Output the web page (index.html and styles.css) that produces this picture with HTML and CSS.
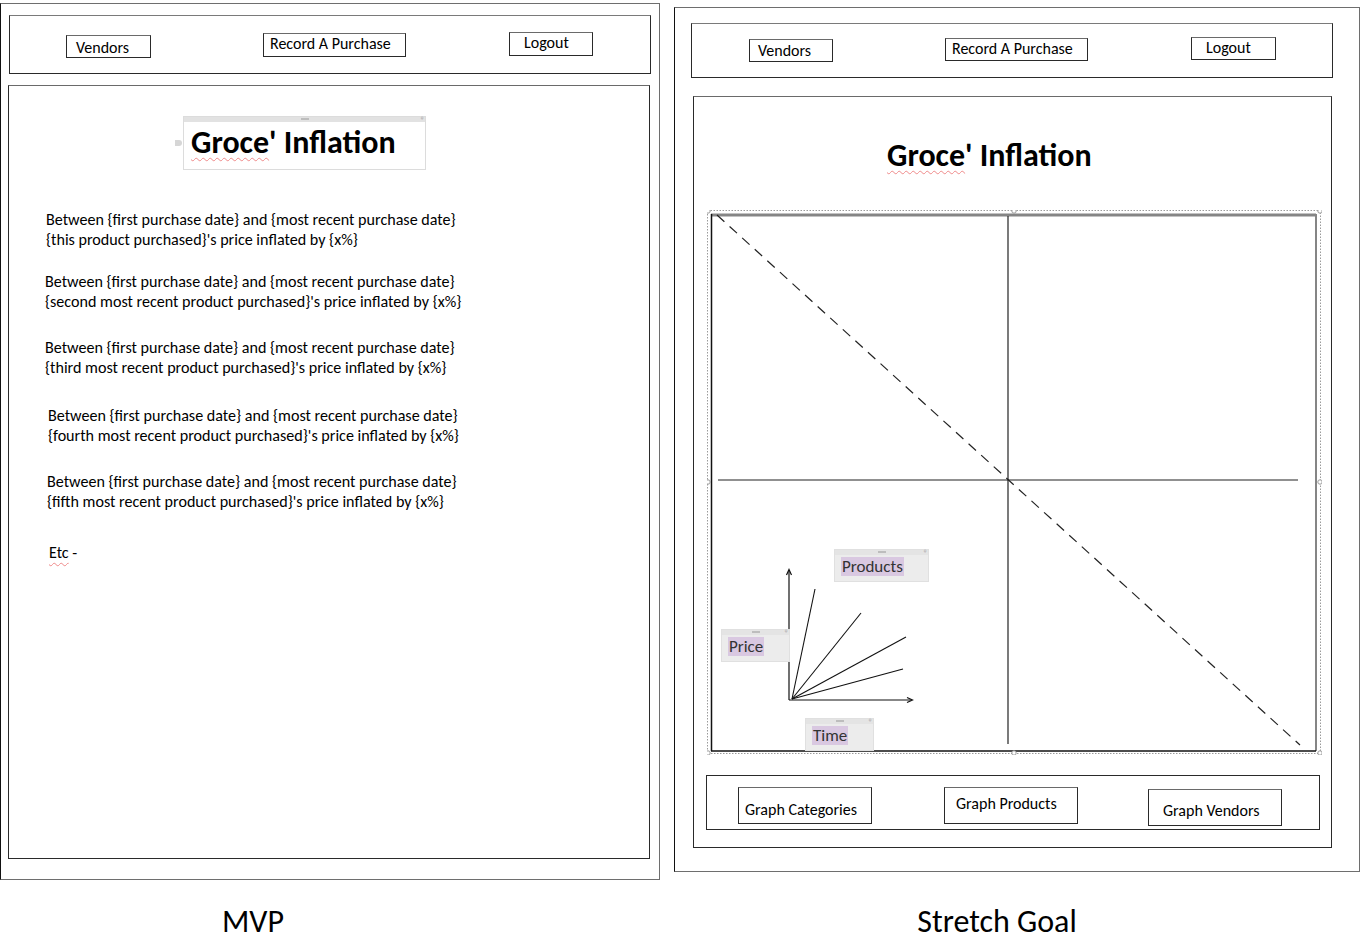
FILE: index.html
```html
<!DOCTYPE html>
<html lang="en">
<head>
<meta charset="utf-8">
<title>Groce' Inflation wireframes</title>
<link rel="stylesheet" href="styles.css">
</head>
<body>
<div class="page">
  <div class="boards">
    <section class="frame mvp">
      <nav class="nav">
        <div class="btn b-vendors">Vendors</div>
        <div class="btn b-record">Record A Purchase</div>
        <div class="btn b-logout">Logout</div>
      </nav>
      <main class="content">
        <div class="titlebox">
          <span class="bar"><i class="grip"></i><i class="arrows">&#8249;&#8250;</i></span>
          <h1 class="title"><span class="spell">Groce</span>' Inflation</h1>
        </div>
        <p class="item i1">Between {first purchase date} and {most recent purchase date}<br>{this product purchased}'s price inflated by {x%}</p>
        <p class="item i2">Between {first purchase date} and {most recent purchase date}<br>{second most recent product purchased}'s price inflated by {x%}</p>
        <p class="item i3">Between {first purchase date} and {most recent purchase date}<br>{third most recent product purchased}'s price inflated by {x%}</p>
        <p class="item i4">Between {first purchase date} and {most recent purchase date}<br>{fourth most recent product purchased}'s price inflated by {x%}</p>
        <p class="item i5">Between {first purchase date} and {most recent purchase date}<br>{fifth most recent product purchased}'s price inflated by {x%}</p>
        <p class="item i6"><span class="spell">Etc</span> -</p>
      </main>
    </section>

    <section class="frame stretch">
      <nav class="nav">
        <div class="btn b-vendors">Vendors</div>
        <div class="btn b-record">Record A Purchase</div>
        <div class="btn b-logout">Logout</div>
      </nav>
      <main class="content">
        <h1 class="title"><span class="spell">Groce</span>' Inflation</h1>
        <div class="graph">
          <svg class="graph-svg" width="615" height="545" viewBox="0 0 615 545">
            <rect x="0.5" y="0.5" width="613" height="543" fill="none" stroke="#9a9a9a" stroke-width="1" stroke-dasharray="1.5 1.5"/>
            <line x1="4" y1="5" x2="609" y2="5" stroke="#858585" stroke-width="3"/>
            <line x1="609" y1="4" x2="609" y2="541" stroke="#858585" stroke-width="2"/>
            <line x1="4.5" y1="4" x2="4.5" y2="541" stroke="#111" stroke-width="1.5"/>
            <line x1="4" y1="541" x2="609" y2="541" stroke="#111" stroke-width="1.5"/>
            <line x1="301" y1="6" x2="301" y2="534" stroke="#222" stroke-width="1.2"/>
            <line x1="11" y1="270" x2="591" y2="270" stroke="#222" stroke-width="1.2"/>
            <line x1="10" y1="5" x2="593" y2="535" stroke="#222" stroke-width="1.2" stroke-dasharray="10 7"/>
            <line x1="82" y1="360" x2="82" y2="490" stroke="#111" stroke-width="1.2"/>
            <polyline points="79.5,365 82,359.5 84.5,365" fill="none" stroke="#111" stroke-width="1.2"/>
            <line x1="82" y1="490" x2="205" y2="490" stroke="#111" stroke-width="1.2"/>
            <polyline points="200,487.5 205.5,490 200,492.5" fill="none" stroke="#111" stroke-width="1.2"/>
            <line x1="85" y1="489" x2="108" y2="379" stroke="#111" stroke-width="1.1"/>
            <line x1="85" y1="489" x2="154" y2="403" stroke="#111" stroke-width="1.1"/>
            <line x1="85" y1="489" x2="199" y2="427" stroke="#111" stroke-width="1.1"/>
            <line x1="85" y1="489" x2="196" y2="459" stroke="#111" stroke-width="1.1"/>
            <g fill="#fff" stroke="#9a9a9a" stroke-width="1">
              <circle cx="1" cy="1" r="2.2"/><circle cx="307" cy="1" r="2.2"/><circle cx="613" cy="1" r="2.2"/>
              <circle cx="1" cy="272" r="2.2"/><circle cx="613" cy="272" r="2.2"/>
              <circle cx="1" cy="543" r="2.2"/><circle cx="307" cy="543" r="2.2"/><circle cx="613" cy="543" r="2.2"/>
            </g>
          </svg>
          <div class="tag t-products"><span class="bar"><i class="grip"></i><i class="arrows">&#8249;&#8250;</i></span><span class="hl">Products</span></div>
          <div class="tag t-price"><span class="bar"><i class="grip"></i><i class="arrows">&#8249;&#8250;</i></span><span class="hl">Price</span></div>
          <div class="tag t-time"><span class="bar"><i class="grip"></i><i class="arrows">&#8249;&#8250;</i></span><span class="hl">Time</span></div>
        </div>
        <div class="graphbar">
          <div class="btn g-cat">Graph Categories</div>
          <div class="btn g-prod">Graph Products</div>
          <div class="btn g-vend">Graph Vendors</div>
        </div>
      </main>
    </section>
  </div>
  <div class="captions">
    <span class="cap cap-mvp">MVP</span>
    <span class="cap cap-stretch">Stretch Goal</span>
  </div>
</div>
</body>
</html>
```

FILE: styles.css
```css
* { box-sizing: border-box; }
html, body { margin: 0; padding: 0; background: #fff; }
body {
  font-family: "Carlito", "Lato", "Liberation Sans", sans-serif;
  color: #000;
  width: 1364px;
  height: 948px;
  overflow: hidden;
}
.boards { display: flex; align-items: flex-start; }

.frame {
  border: 1px solid #6e6e6e;
  border-left-color: #111;
  display: flex;
  flex-direction: column;
  align-items: flex-start;
}
.mvp { width: 660px; height: 877px; margin-top: 3px; }
.stretch { width: 686px; height: 865px; margin-top: 7px; margin-left: 14px; }

.nav {
  display: flex;
  align-items: flex-start;
  border: 1px solid #2a2a2a;
  border-top-color: #7a7a7a;
  width: 642px;
}
.mvp .nav { height: 59px; margin: 11px 0 0 8px; }
.stretch .nav { height: 55px; margin: 15px 0 0 16px; }

.btn {
  border: 1px solid #2a2a2a;
  border-top-color: #6a6a6a;
  font-size: 16px;
  white-space: nowrap;
  line-height: 20px;
}
.mvp .b-vendors { width: 85px; height: 23px; margin: 19px 0 0 56px; padding: 2px 0 0 9px; }
.mvp .b-record { width: 143px; height: 24px; margin: 17px 0 0 112px; padding: 0 0 0 6px; }
.mvp .b-logout { width: 84px; height: 24px; margin: 16px 0 0 103px; padding: 0 0 0 14px; }
.stretch .b-vendors { width: 84px; height: 23px; margin: 15px 0 0 57px; padding: 1px 0 0 8px; }
.stretch .b-record { width: 143px; height: 23px; margin: 14px 0 0 112px; padding: 0 0 0 6px; }
.stretch .b-logout { width: 85px; height: 23px; margin: 13px 0 0 103px; padding: 0 0 0 14px; }

.content {
  border: 1px solid #2a2a2a;
  border-top-color: #6a6a6a;
  display: flex;
  flex-direction: column;
  align-items: flex-start;
}
.mvp .content { width: 642px; height: 774px; margin: 11px 0 0 7px; }
.stretch .content { width: 639px; height: 752px; margin: 18px 0 0 18px; }

.title {
  margin: 0;
  font-size: 32px;
  font-weight: 700;
  line-height: 38px;
  letter-spacing: 0;
  white-space: nowrap;
}
.spell {
  text-decoration: underline wavy #ef8a8a;
  text-decoration-thickness: 1px;
  text-underline-offset: 4px;
  text-decoration-skip-ink: none;
}

.titlebox {
  position: relative;
  width: 243px;
  height: 54px;
  margin: 30px 0 0 174px;
  border: 1px solid #dcdcdc;
  padding: 7px 0 0 7px;
}
.titlebox::before {
  content: "";
  position: absolute;
  left: -9px;
  top: 23px;
  width: 7px;
  height: 6px;
  border-radius: 0 4px 4px 0;
  background: #d6d6d6;
}
.bar {
  position: absolute;
  left: 0;
  right: 0;
  top: 0;
  height: 5px;
  background: #e2e2e2;
}
.grip {
  position: absolute;
  left: 50%;
  top: 1px;
  width: 8px;
  height: 2px;
  margin-left: -4px;
  background: #bdbdbd;
}
.arrows {
  position: absolute;
  right: 2px;
  top: -4px;
  font-style: normal;
  font-size: 7px;
  line-height: 10px;
  color: #999;
  letter-spacing: -1px;
}

.item {
  margin: 0;
  font-size: 16.1px;
  line-height: 19.5px;
  white-space: nowrap;
}
.i1 { margin: 40px 0 0 37px; }
.i2 { margin: 23px 0 0 36px; }
.i3 { margin: 27px 0 0 36px; }
.i4 { margin: 29px 0 0 39px; }
.i5 { margin: 27px 0 0 38px; }
.i6 { margin: 32px 0 0 40px; }

.stretch .title { margin: 40px 0 0 193px; }

.graph {
  position: relative;
  width: 615px;
  height: 545px;
  margin: 35px 0 0 13px;
}
.graph-svg { display: block; }

.tag {
  position: absolute;
  background: #ececec;
  border: 1px solid #e0e0e0;
  height: 33px;
  padding: 7px 0 0 6px;
  font-size: 17px;
  line-height: 19px;
  color: #333;
}
.tag .bar { height: 5px; background: #e4e4e4; }
.hl { background: #d9c8e1; padding: 0 1px; display: inline-block; }
.t-products { left: 127px; top: 339px; width: 95px; }
.t-price { left: 14px; top: 419px; width: 69px; }
.t-time { left: 98px; top: 508px; width: 69px; }

.graphbar {
  display: flex;
  align-items: flex-start;
  width: 614px;
  height: 55px;
  margin: 20px 0 0 12px;
  border: 1px solid #2a2a2a;
}
.graphbar .btn { width: 134px; height: 37px; }
.g-cat { margin: 11px 0 0 31px; padding: 12px 0 0 6px; }
.g-prod { margin: 11px 0 0 72px; padding: 6px 0 0 11px; }
.g-vend { margin: 13px 0 0 70px; padding: 11px 0 0 14px; }

.captions { display: flex; margin-top: 24px; }
.cap { font-size: 32px; line-height: 36px; text-align: center; white-space: nowrap; }
.cap-mvp { width: 506px; }
.cap-stretch { width: 730px; margin-left: 126px; }
```
